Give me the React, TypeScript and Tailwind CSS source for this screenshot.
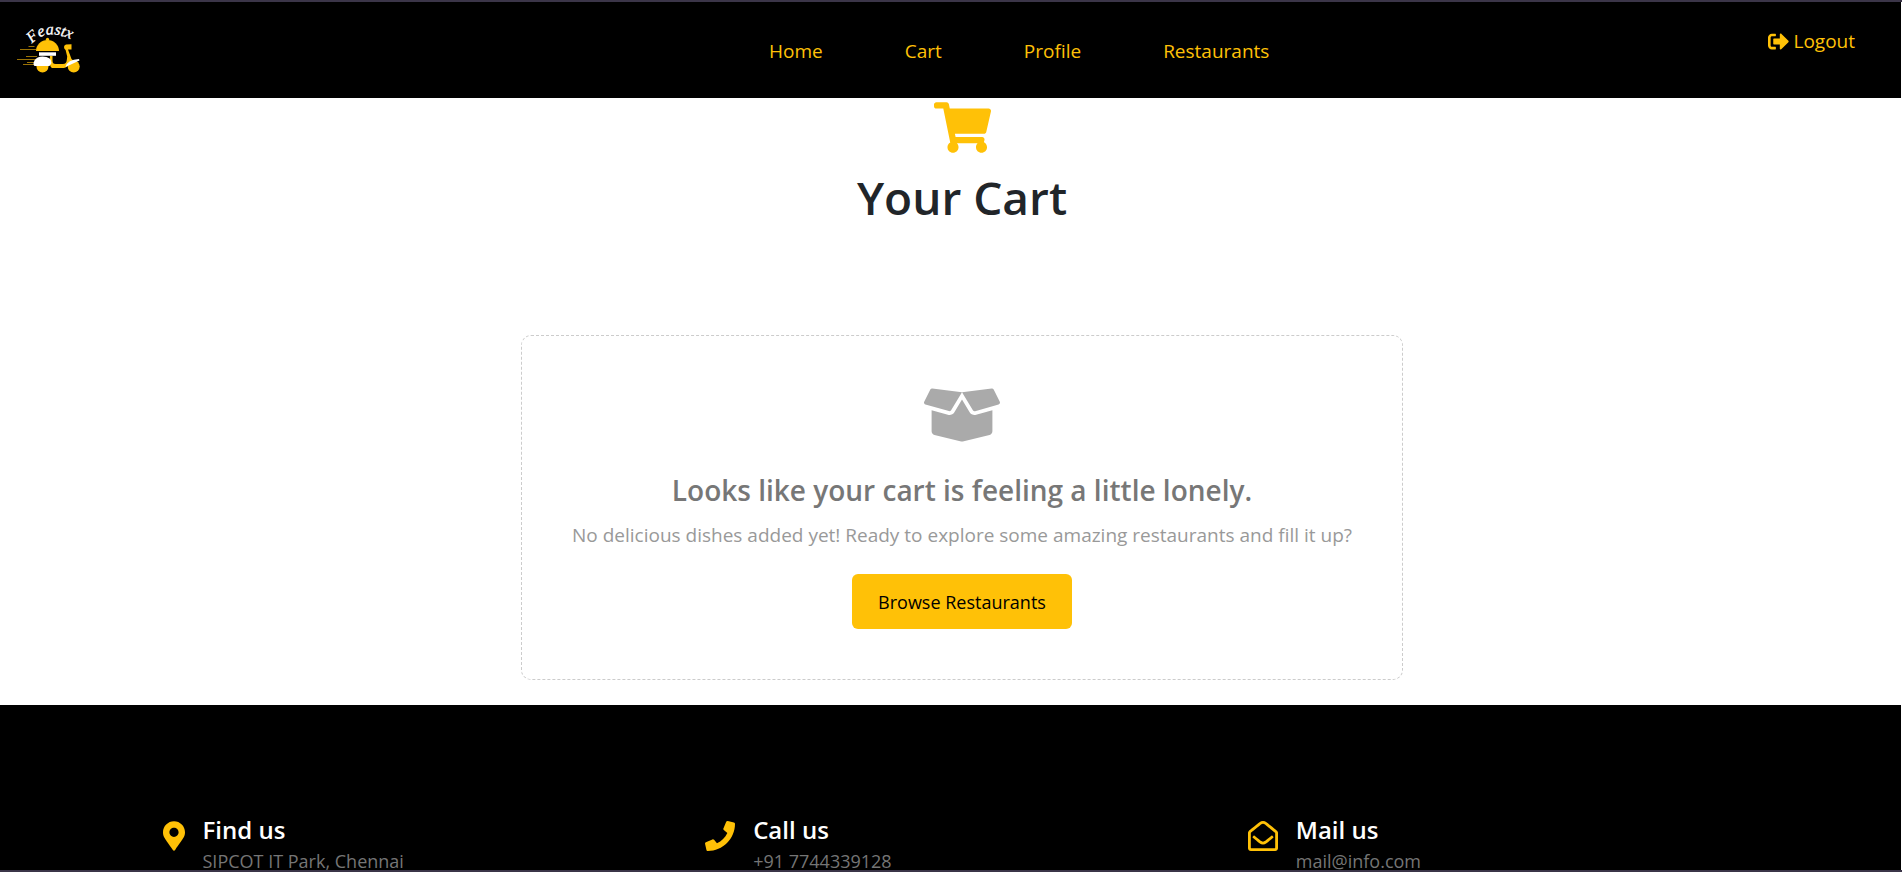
import {
  FaShoppingCart,
  FaSignOutAlt,
  FaBoxOpen,
  FaMapMarkerAlt,
  FaPhone,
  FaRegEnvelopeOpen,
} from 'react-icons/fa';
import type { ReactNode } from 'react';

function Logo() {
  return (
    <svg viewBox="0 0 66 54" className="h-[54px] w-[66px] overflow-visible" role="img" aria-label="Feastx">
      <defs>
        <path id="arc" d="M16 24 Q30 7 56 20" />
      </defs>
      <text
        fill="#fff"
        stroke="#fff"
        strokeWidth="0.3"
        fontSize="16"
        fontStyle="italic"
        fontFamily='"Liberation Serif", serif'
      >
        <textPath href="#arc">Feastx</textPath>
      </text>
      <g stroke="#c28f08" strokeWidth="0.8">
        <path d="M12.500 26.500h6M4 29.500h16M10 36.500h11M1 39.500h20M11 42.500h11M7 44.500h15" />
      </g>
      <path d="M20 31a11.500 11 0 0 1 23 0z" fill="#ffc107" />
      <circle cx="31.500" cy="19.300" r="1.600" fill="#ffc107" />
      <path d="M23 32.300h17v3.500h-17z" fill="#fff" />
      <circle cx="26.500" cy="46.500" r="6" fill="#ffc107" />
      <circle cx="57.700" cy="46.500" r="6" fill="#ffc107" />
      <path
        d="M34 36h2.500v4.500q0 3.500 3 3.500h7.500q3.500 0 3.800-4l.4-3.500-1.600-6.500q-1.600-1-1.600-3t2-2.500l5.500-.2v5.200h-3.500l3.500 9.500 3 2.500-9 6q-2 .5-3 .5H36q-3-1-2-12z"
        fill="#ffc107"
      />
      <path d="M18.500 46q-2-2 0-5.500 2.500-4 8-4 9 0 9 6.500l-2 3z" fill="#fff" />
      <path d="M49.500 47q2-7.500 13.500-8l.5 1.500z" fill="#fff" />
    </svg>
  );
}

const links = ['Home', 'Cart', 'Profile', 'Restaurants'];

function Contact({ icon, title, text }: { icon: ReactNode; title: string; text: string }) {
  return (
    <div className="flex items-start gap-[18px] pl-[26px]">
      <span className="pt-[6px] text-[#ffc107]">{icon}</span>
      <div>
        <h4 className="text-[24px] leading-[30px] font-semibold text-white">{title}</h4>
        <p className="mt-[7px] text-[18px] leading-[18px] text-[#757575]">{text}</p>
      </div>
    </div>
  );
}

export default function App() {
  return (
    <div className="flex min-h-screen flex-col border-y-2 border-[#3b3548] bg-white font-['Open_Sans','Noto_Sans',sans-serif] text-[#212529]">
      <header className="mr-px flex h-24 items-start bg-black pr-[46px] pl-4 text-[19px] text-[#ffc107]">
        <a href="#home" className="pt-[18px]">
          <Logo />
        </a>
        <nav className="flex grow justify-center gap-[82px] pt-[34px] pl-[188px] leading-[30px]">
          {links.map((l) => (
            <a key={l} href={`#${l.toLowerCase()}`}>{l}</a>
          ))}
        </nav>
        <button className="flex items-center gap-1 pt-6 leading-[30px]">
          <FaSignOutAlt className="text-[21px]" />
          Logout
        </button>
      </header>

      <main className="flex flex-col items-center pt-px pb-[25px] pl-[22px]">
        <FaShoppingCart className="text-[#ffc107]" size={57} />
        <h1 className="mt-[11px] text-[46px] leading-[60px] font-semibold">Your Cart</h1>
        <section className="mt-[108px] flex flex-col items-center rounded-[10px] border border-dashed border-[#cccccc] px-[50px] pt-[41px] pb-[50px]">
          <FaBoxOpen className="text-[#aaaaaa]" size={76} />
          <h2 className="mt-[19px] text-[28px] leading-[36px] font-semibold text-[#777777]">
            Looks like your cart is feeling a little lonely.
          </h2>
          <p className="mt-3 text-[19px] leading-[30px] text-[#999999]">
            No delicious dishes added yet! Ready to explore some amazing restaurants and fill it up?
          </p>
          <button className="mt-6 rounded-md bg-[#ffc107] px-[26px] pt-[13px] pb-[11px] text-[18px] leading-[31px] text-black">
            Browse Restaurants
          </button>
        </section>
      </main>

      <footer className="mr-px grow bg-black pt-[110px]">
        <div className="mx-auto grid max-w-[1628px] grid-cols-3">
          <Contact
            icon={<FaMapMarkerAlt className="h-[30px] w-[22px]" />}
            title="Find us"
            text="SIPCOT IT Park, Chennai"
          />
          <Contact icon={<FaPhone size={30} />} title="Call us" text="+91 7744339128" />
          <Contact icon={<FaRegEnvelopeOpen size={30} />} title="Mail us" text="mail@info.com" />
        </div>
      </footer>
    </div>
  );
}
